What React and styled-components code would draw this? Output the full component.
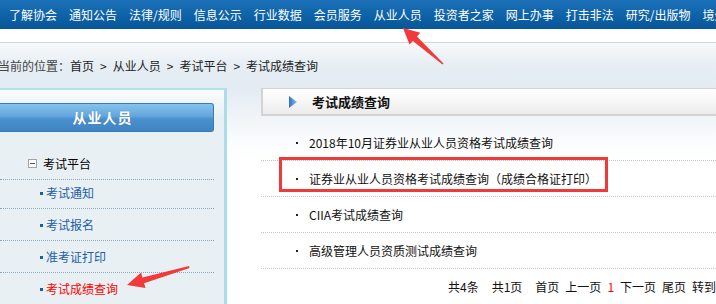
import React from 'react';
import styled, { createGlobalStyle } from 'styled-components';

const GlobalStyle = createGlobalStyle`
  html, body {
    margin: 0;
    padding: 0;
    background: #fff;
  }
  body {
    font-family: "Noto Sans CJK SC", "Liberation Sans", sans-serif;
    font-size: 12px;
    color: #222;
  }
  ul {
    list-style: none;
    margin: 0;
    padding: 0;
  }
`;

const Page = styled.div`
  position: relative;
  width: 716px;
  height: 304px;
  overflow: hidden;
`;

const Nav = styled.div`
  display: flex;
  align-items: center;
  gap: 12px;
  height: 29px;
  padding-left: 9px;
  white-space: nowrap;
  background: linear-gradient(to bottom, #1d71b8 0%, #0f63a8 50%, #075698 100%);
`;

const NavItem = styled.span`
  color: #fff;
  font-size: 12px;
  line-height: 29px;
`;

const WhiteBand = styled.div`
  height: 13px;
  border-bottom: 1px solid #d3d6d9;
  background: #fff;
`;

const Main = styled.div`
  background: linear-gradient(to bottom, #f7f9fb 0px, #e6eef4 22px, #e3ecf3 45px, #eef3f7 70px, #fbfcfd 100px, #fff 120px);
`;

const Crumb = styled.div`
  height: 45px;
  line-height: 45px;
  text-indent: -2px;
  white-space: nowrap;
  color: #222;
`;

const CrumbLabel = styled.span`
  color: #444;
`;

const Sep = styled.span`
  margin: 0 6px;
`;

const Content = styled.div`
  display: flex;
  align-items: flex-start;
  gap: 34px;
`;

const Side = styled.div`
  width: 214px;
  flex-shrink: 0;
  height: 220px;
  border-top: 2px solid #b2e2ec;
  border-right: 3px solid #aadde8;
  background: linear-gradient(to bottom, #fbfdfe 0px, #f1f6f9 12px, #e9f0f4 28px, #e9f0f4 100%);
  padding: 13px 10px 0 0;
  box-sizing: content-box;
`;

const SideTitle = styled.div`
  height: 27px;
  line-height: 27px;
  padding-right: 8px;
  text-align: center;
  color: #fff;
  font-size: 14px;
  font-weight: bold;
  letter-spacing: 1px;
  border: 1px solid #3a7bb7;
  border-left: none;
  border-radius: 0 3px 3px 0;
  background: linear-gradient(to bottom, #86c2ec 0%, #64a6dd 45%, #4a90cf 55%, #3f84c2 100%);
  text-shadow: 0 0 1px rgba(0, 0, 0, 0.25);
`;

const TreeHead = styled.div`
  display: flex;
  align-items: center;
  gap: 6px;
  height: 31px;
  margin-top: 16px;
  padding-left: 28px;
  border-bottom: 1px dotted #86a9c0;
  color: #000;
`;

const MinusBox = styled.span`
  position: relative;
  width: 7px;
  height: 7px;
  border: 1px solid #a4a4a4;
  background: #fff;
  &::after {
    content: '';
    position: absolute;
    left: 1px;
    right: 1px;
    top: 3px;
    height: 1px;
    background: #555;
  }
`;

const SubItem = styled.li`
  display: flex;
  align-items: center;
  gap: 3px;
  padding: 9px 0 8px 40px;
  line-height: 14px;
  border-bottom: 1px dotted #86a9c0;
  color: ${(p) => (p.$active ? '#f00' : '#1b5ea8')};
  &:first-child {
    padding-top: 6px;
  }
`;

const Square = styled.span`
  width: 3px;
  height: 3px;
  background: #1b5ea8;
`;

const Body = styled.div`
  flex: 1;
  min-width: 0;
`;

const BoxHead = styled.div`
  display: flex;
  align-items: center;
  gap: 15px;
  height: 25px;
  padding-left: 26px;
  border: 2px solid #d3d3d3;
  border-right: none;
  border-top-width: 1px;
  background: linear-gradient(to bottom, #fff 0%, #f8f8f8 45%, #ebebeb 100%);
  white-space: nowrap;
`;

const BoxTitle = styled.span`
  font-size: 13px;
  font-weight: bold;
  color: #111;
`;

const List = styled.ul`
  padding-top: 9px;
`;

const Row = styled.li`
  position: relative;
  display: flex;
  align-items: center;
  gap: 11px;
  height: 35px;
  padding-left: 35px;
  border-bottom: 1px dotted #c6c6c6;
  color: #111;
  white-space: nowrap;
`;

const Dot = styled.span`
  width: 2px;
  height: 2px;
  background: #222;
`;

const Highlight = styled.span`
  position: absolute;
  left: 18px;
  top: -4px;
  width: 323px;
  height: 29px;
  border: 3px solid #f03a3a;
  pointer-events: none;
`;

const Pager = styled.div`
  display: flex;
  align-items: center;
  height: 34px;
  padding-left: 187px;
  white-space: nowrap;
  color: #111;
`;

const PageBit = styled.span`
  margin-right: ${(p) => (p.$wide ? '13px' : '6px')};
  color: ${(p) => (p.$current ? '#f00' : '#111')};
`;

const Arrows = styled.svg`
  position: absolute;
  left: 0;
  top: 0;
  pointer-events: none;
`;

const navItems = ['了解协会', '通知公告', '法律/规则', '信息公示', '行业数据', '会员服务', '从业人员', '投资者之家', '网上办事', '打击非法', '研究/出版物', '境外机构'];
const subItems = ['考试通知', '考试报名', '准考证打印', '考试成绩查询'];
const rows = [
  '2018年10月证券业从业人员资格考试成绩查询',
  '证券业从业人员资格考试成绩查询（成绩合格证打印）',
  'CIIA考试成绩查询',
  '高级管理人员资质测试成绩查询',
];

export default function App() {
  return (
    <Page>
      <GlobalStyle />
      <Nav>
        {navItems.map((n) => (
          <NavItem key={n}>{n}</NavItem>
        ))}
      </Nav>
      <WhiteBand />
      <Main>
        <Crumb>
          <CrumbLabel>当前的位置：</CrumbLabel>首页<Sep>&gt;</Sep>从业人员<Sep>&gt;</Sep>考试平台<Sep>&gt;</Sep>考试成绩查询
        </Crumb>
        <Content>
          <Side>
            <SideTitle>从业人员</SideTitle>
            <TreeHead>
              <MinusBox />
              考试平台
            </TreeHead>
            <ul>
              {subItems.map((s, i) => (
                <SubItem key={s} $active={i === subItems.length - 1}>
                  <Square />
                  {s}
                </SubItem>
              ))}
            </ul>
          </Side>
          <Body>
            <BoxHead>
              <svg width="8" height="12" viewBox="0 0 8 12">
                <defs>
                  <linearGradient id="tri" x1="0" y1="0" x2="1" y2="0">
                    <stop offset="0" stopColor="#2f6fc8" />
                    <stop offset="1" stopColor="#8fbcef" />
                  </linearGradient>
                </defs>
                <polygon points="0,0 8,6 0,12" fill="url(#tri)" />
              </svg>
              <BoxTitle>考试成绩查询</BoxTitle>
            </BoxHead>
            <List>
              {rows.map((r, i) => (
                <Row key={r}>
                  <Dot />
                  {r}
                  {i === 1 && <Highlight />}
                </Row>
              ))}
            </List>
            <Pager>
              <PageBit $wide>共4条</PageBit>
              <PageBit $wide>共1页</PageBit>
              <PageBit>首页</PageBit>
              <PageBit>上一页</PageBit>
              <PageBit $current>1</PageBit>
              <PageBit>下一页</PageBit>
              <PageBit>尾页</PageBit>
              <PageBit>转到第</PageBit>
            </Pager>
          </Body>
        </Content>
      </Main>
      <Arrows width="716" height="304" viewBox="0 0 716 304">
        <polygon
          points="403,28 420.3,32.8 416.9,36.5 443.5,63.5 442.5,64.5 412.9,40.9 409.5,44.6"
          fill="#f23a3a"
        />
        <polygon
          points="127,285 141.1,272.6 142.5,277.4 189,266 189.5,268 144.1,283.2 145.5,288"
          fill="#f23a3a"
        />
      </Arrows>
    </Page>
  );
}
